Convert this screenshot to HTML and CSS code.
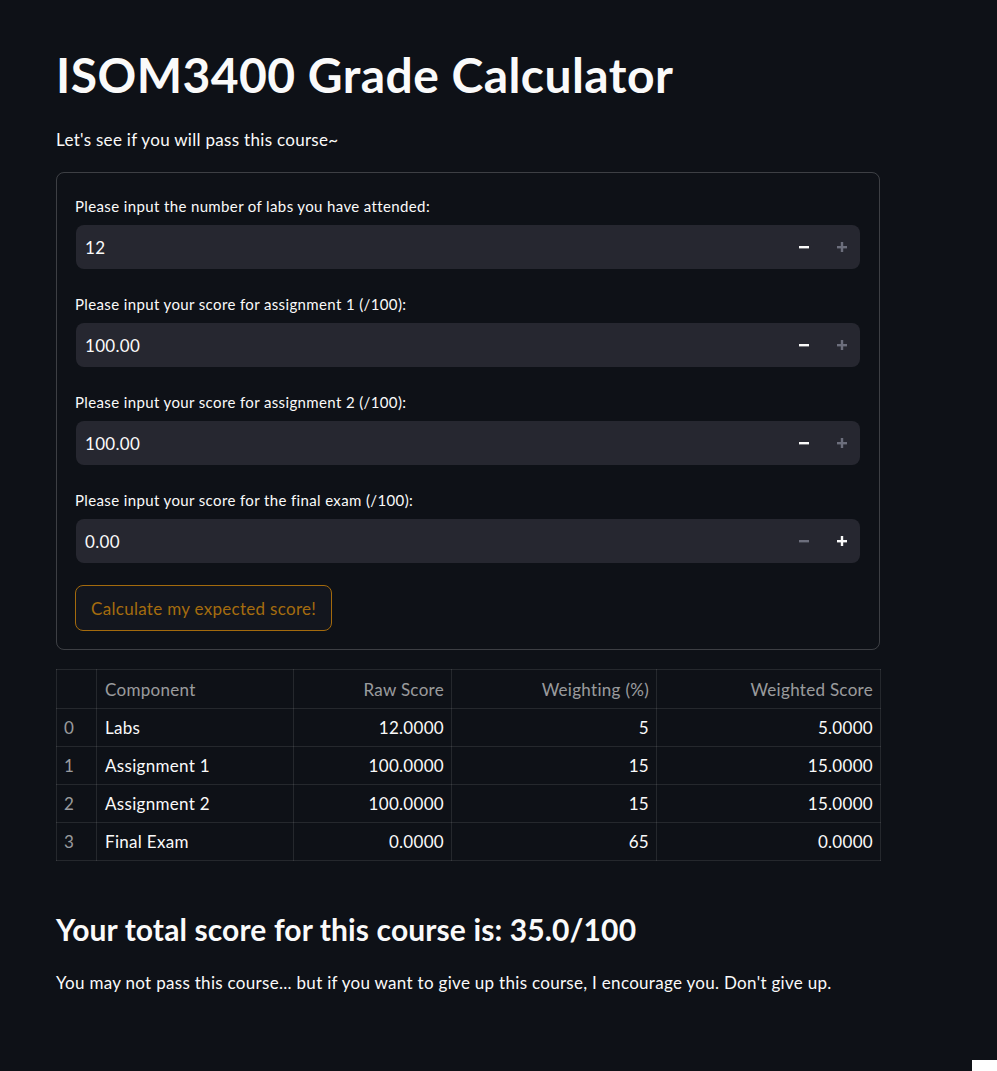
FILE: index.html
```html
<!DOCTYPE html>
<html lang="en">
<head>
<meta charset="utf-8">
<title>ISOM3400 Grade Calculator</title>
<link rel="stylesheet" href="styles.css">
</head>
<body>
<main class="main">
  <h1 class="title">ISOM3400 Grade Calculator</h1>
  <p class="intro">Let's see if you will pass this course~</p>

  <form class="form">
    <div class="field">
      <label class="label">Please input the number of labs you have attended:</label>
      <div class="numinput">
        <span class="value">12</span>
        <span class="step minus on"><svg width="12" height="12" viewBox="0 0 12 12"><rect x="1" y="5" width="10" height="2.4" fill="currentColor"/></svg></span>
        <span class="step plus off"><svg width="12" height="12" viewBox="0 0 12 12"><rect x="1" y="5" width="10" height="2.4" fill="currentColor"/><rect x="4.8" y="1" width="2.4" height="10" fill="currentColor"/></svg></span>
      </div>
    </div>
    <div class="field">
      <label class="label">Please input your score for assignment 1 (/100):</label>
      <div class="numinput">
        <span class="value">100.00</span>
        <span class="step minus on"><svg width="12" height="12" viewBox="0 0 12 12"><rect x="1" y="5" width="10" height="2.4" fill="currentColor"/></svg></span>
        <span class="step plus off"><svg width="12" height="12" viewBox="0 0 12 12"><rect x="1" y="5" width="10" height="2.4" fill="currentColor"/><rect x="4.8" y="1" width="2.4" height="10" fill="currentColor"/></svg></span>
      </div>
    </div>
    <div class="field">
      <label class="label">Please input your score for assignment 2 (/100):</label>
      <div class="numinput">
        <span class="value">100.00</span>
        <span class="step minus on"><svg width="12" height="12" viewBox="0 0 12 12"><rect x="1" y="5" width="10" height="2.4" fill="currentColor"/></svg></span>
        <span class="step plus off"><svg width="12" height="12" viewBox="0 0 12 12"><rect x="1" y="5" width="10" height="2.4" fill="currentColor"/><rect x="4.8" y="1" width="2.4" height="10" fill="currentColor"/></svg></span>
      </div>
    </div>
    <div class="field">
      <label class="label">Please input your score for the final exam (/100):</label>
      <div class="numinput">
        <span class="value">0.00</span>
        <span class="step minus off"><svg width="12" height="12" viewBox="0 0 12 12"><rect x="1" y="5" width="10" height="2.4" fill="currentColor"/></svg></span>
        <span class="step plus on"><svg width="12" height="12" viewBox="0 0 12 12"><rect x="1" y="5" width="10" height="2.4" fill="currentColor"/><rect x="4.8" y="1" width="2.4" height="10" fill="currentColor"/></svg></span>
      </div>
    </div>
    <button type="button" class="btn">Calculate my expected score!</button>
  </form>

  <table class="grid">
    <colgroup>
      <col class="c0"><col class="c1"><col class="c2"><col class="c3"><col class="c4">
    </colgroup>
    <thead>
      <tr><th></th><th class="left">Component</th><th>Raw Score</th><th>Weighting (%)</th><th>Weighted Score</th></tr>
    </thead>
    <tbody>
      <tr><td class="idx">0</td><td class="left">Labs</td><td>12.0000</td><td>5</td><td>5.0000</td></tr>
      <tr><td class="idx">1</td><td class="left">Assignment 1</td><td>100.0000</td><td>15</td><td>15.0000</td></tr>
      <tr><td class="idx">2</td><td class="left">Assignment 2</td><td>100.0000</td><td>15</td><td>15.0000</td></tr>
      <tr><td class="idx">3</td><td class="left">Final Exam</td><td>0.0000</td><td>65</td><td>0.0000</td></tr>
    </tbody>
  </table>

  <h3 class="total">Your total score for this course is: 35.0/100</h3>
  <p class="verdict">You may not pass this course... but if you want to give up this course, I encourage you. Don't give up.</p>
</main>
<div class="corner"></div>
</body>
</html>
```

FILE: styles.css
```css
html, body {
  margin: 0;
  padding: 0;
  background: #0e1117;
  color: #fafafa;
  font-family: Lato, "Noto Sans", sans-serif;
}

.main {
  width: 824px;
  padding: 46px 0 60px 56px;
}

.title {
  margin: 0;
  font-size: 48px;
  font-weight: 700;
  line-height: 58px;
  letter-spacing: 0.45px;
}

.intro {
  margin: 24px 0 0;
  font-size: 17px;
  line-height: 24px;
  letter-spacing: 0.3px;
}

.form {
  margin-top: 20px;
  border: 1px solid rgba(250, 250, 250, 0.2);
  border-radius: 8px;
  padding: 23px 19px 18px;
  display: flex;
  flex-direction: column;
  gap: 25px;
}

.field {
  display: flex;
  flex-direction: column;
  gap: 9px;
}

.label {
  font-size: 15px;
  line-height: 20px;
  height: 20px;
  letter-spacing: 0.37px;
  margin-left: -1px;
}

.numinput {
  height: 44px;
  background: #262730;
  border-radius: 8px;
  display: flex;
  align-items: center;
  padding-left: 9px;
}

.value {
  flex: 1;
  font-size: 17px;
  letter-spacing: 0.3px;
}

.step {
  height: 44px;
  display: flex;
  align-items: center;
  justify-content: center;
}

.step.minus { width: 40px; }
.step.plus { width: 36px; }

.step.on { color: #fafafa; }
.step.off { color: #6c6e7c; }

.btn {
  align-self: flex-start;
  margin-top: -3px;
  margin-left: -1px;
  height: 46px;
  padding: 0 15px;
  background: #13161e;
  border: 1px solid #a36a0d;
  border-radius: 8px;
  color: #a56c0e;
  font-family: inherit;
  font-size: 17px;
  letter-spacing: 0.3px;
}

.grid {
  margin-top: 19px;
  width: 825px;
  border-collapse: collapse;
  font-size: 17px;
  letter-spacing: 0.3px;
}

.c0 { width: 40px; }
.c1 { width: 197px; }
.c2 { width: 158px; }
.c3 { width: 205px; }
.c4 { width: 224px; }

.grid th, .grid td {
  border: 1px solid rgba(250, 250, 250, 0.1);
  height: 37px;
  padding: 0 7px 0 8px;
  text-align: right;
  font-weight: 400;
}

.grid thead th { height: 38px; }

.grid th {
  color: rgba(250, 250, 250, 0.6);
}

.grid .left { text-align: left; }

.grid .idx {
  text-align: left;
  padding-left: 7px;
  color: rgba(250, 250, 250, 0.6);
}

.total {
  margin: 48px 0 0;
  font-size: 30px;
  line-height: 40px;
  font-weight: 700;
  letter-spacing: 0.12px;
}

.verdict {
  margin: 22px 0 0;
  font-size: 17px;
  line-height: 24px;
  letter-spacing: 0.3px;
}

.corner {
  position: fixed;
  right: 0;
  bottom: 0;
  width: 25px;
  height: 11px;
  background: #ffffff;
}
```
